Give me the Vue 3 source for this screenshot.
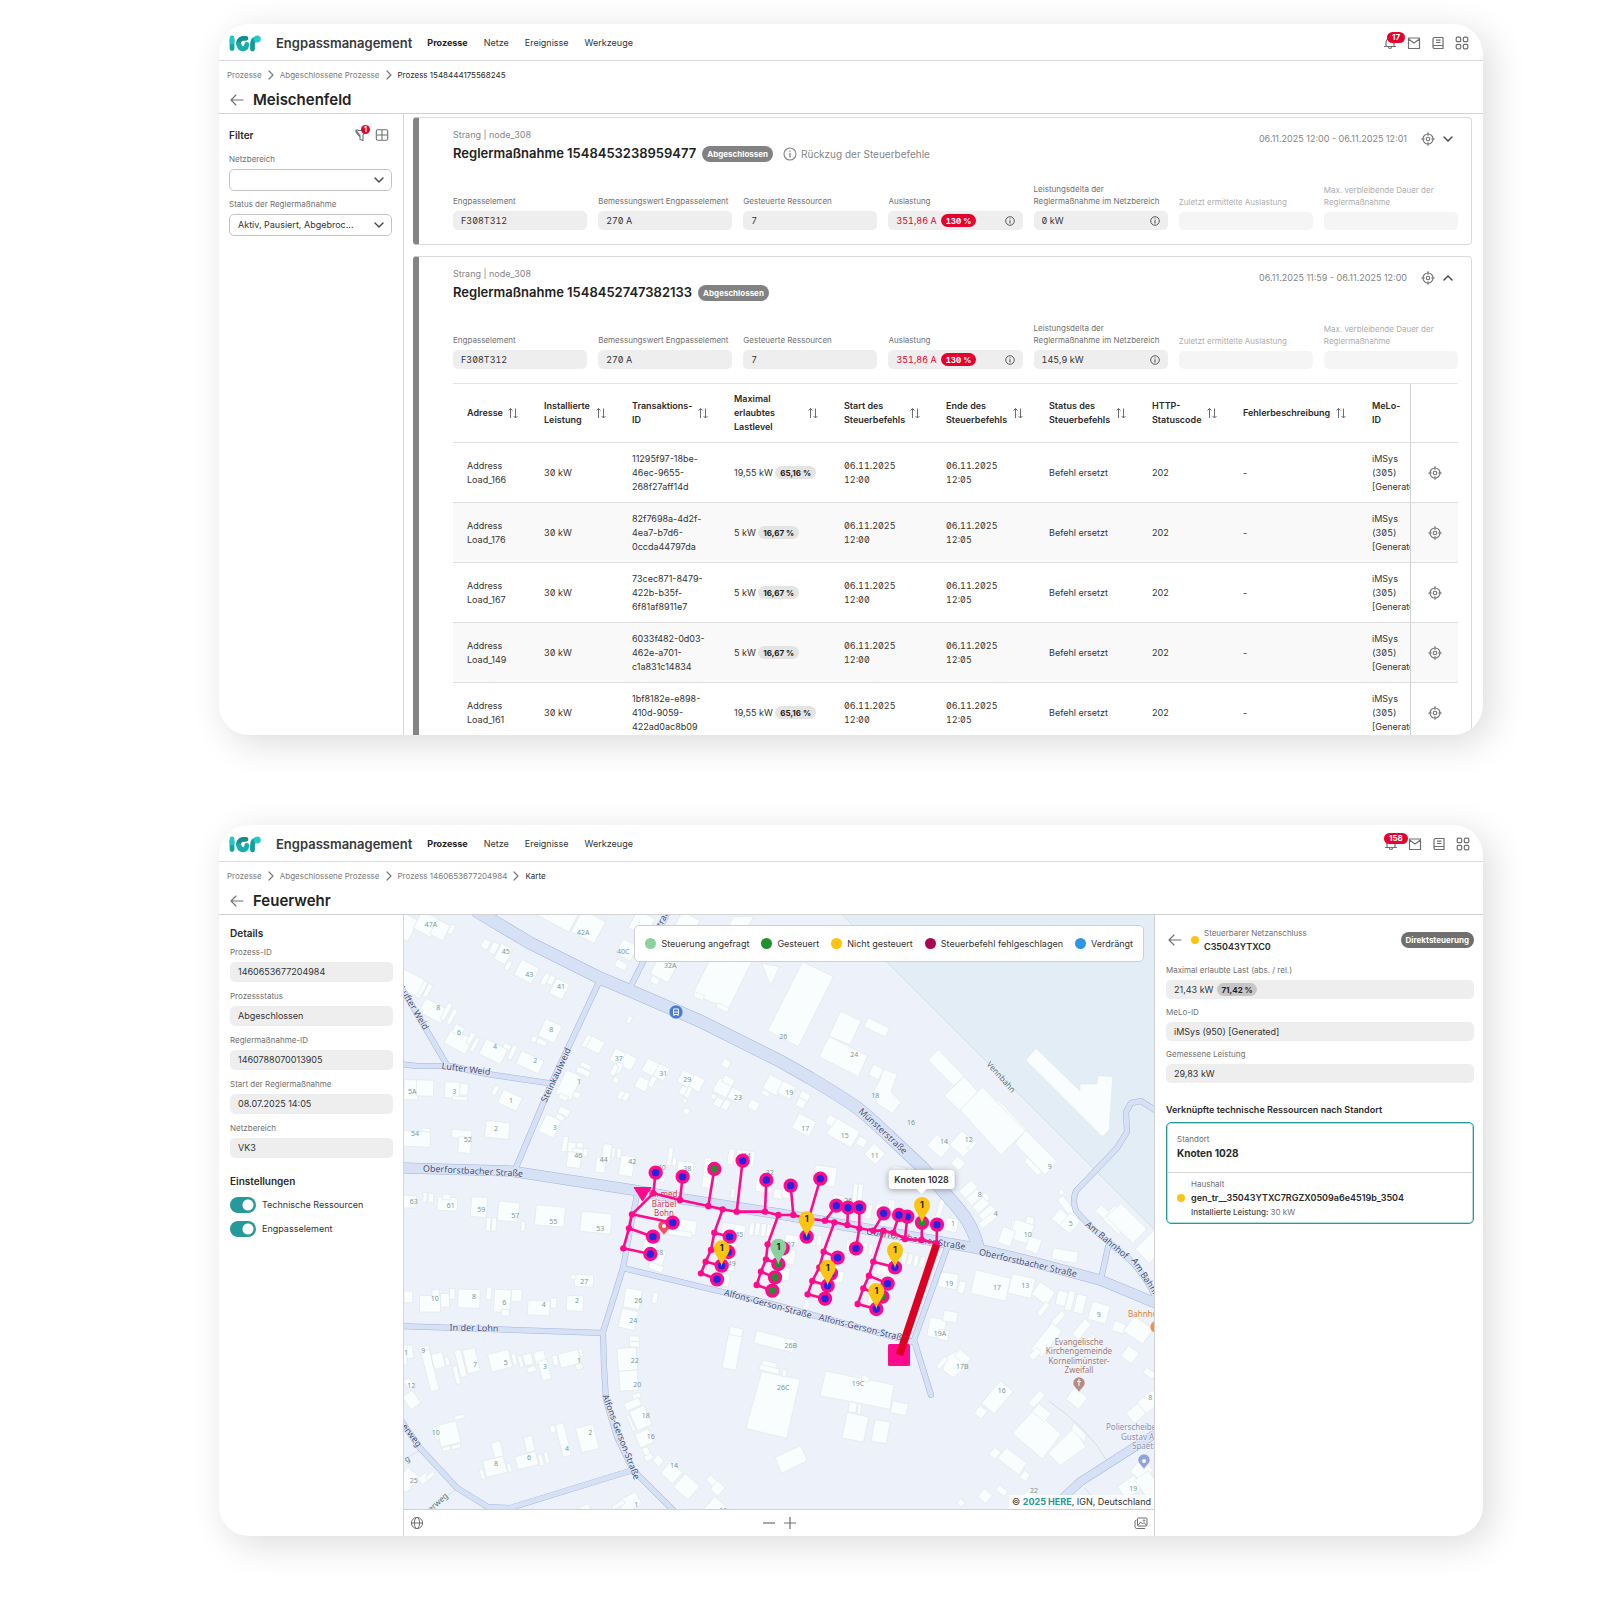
<script setup>
const screens = [
  {
    id: 'liste',
    title: 'Meischenfeld',
    badge: '17',
    crumbs: ['Prozesse', 'Abgeschlossene Prozesse', 'Prozess 1548444175568245'],
  },
  {
    id: 'karte',
    title: 'Feuerwehr',
    badge: '158',
    crumbs: ['Prozesse', 'Abgeschlossene Prozesse', 'Prozess 1460653677204984', 'Karte'],
  },
]
const nav = ['Prozesse', 'Netze', 'Ereignisse', 'Werkzeuge']

const baseFields = (delta) => [
  { label: 'Engpasselement', value: 'F308T312' },
  { label: 'Bemessungswert Engpasselement', value: '270 A' },
  { label: 'Gesteuerte Ressourcen', value: '7' },
  { label: 'Auslastung', value: '351,86 A', pill: '130 %', info: true },
  { label: 'Leistungsdelta der Reglermaßnahme im Netzbereich', value: delta, info: true },
  { label: 'Zuletzt ermittelte Auslastung', disabled: true },
  { label: 'Max. verbleibende Dauer der Reglermaßnahme', disabled: true },
]
const measures = [
  {
    id: '1548453238959477',
    period: '06.11.2025 12:00 - 06.11.2025 12:01',
    note: 'Rückzug der Steuerbefehle',
    open: false,
    fields: baseFields('0 kW'),
  },
  {
    id: '1548452747382133',
    period: '06.11.2025 11:59 - 06.11.2025 12:00',
    open: true,
    fields: baseFields('145,9 kW'),
  },
]

const columns = [
  { text: 'Adresse', w: 77 },
  { text: 'Installierte Leistung', w: 88 },
  { text: 'Transaktions-ID', w: 102 },
  { text: 'Maximal erlaubtes Lastlevel', w: 110 },
  { text: 'Start des Steuerbefehls', w: 102 },
  { text: 'Ende des Steuerbefehls', w: 103 },
  { text: 'Status des Steuerbefehls', w: 103 },
  { text: 'HTTP-Statuscode', w: 91 },
  { text: 'Fehlerbeschreibung', w: 129 },
]
const rows = [
  { load: '166', tx: ['11295f97-18be-', '46ec-9655-', '268f27aff14d'], kw: '19,55 kW', pct: '65,16 %' },
  { load: '176', tx: ['82f7698a-4d2f-', '4ea7-b7d6-', '0ccda44797da'], kw: '5 kW', pct: '16,67 %' },
  { load: '167', tx: ['73cec871-8479-', '422b-b35f-', '6f81af8911e7'], kw: '5 kW', pct: '16,67 %' },
  { load: '149', tx: ['6033f482-0d03-', '462e-a701-', 'c1a831c14834'], kw: '5 kW', pct: '16,67 %' },
  { load: '161', tx: ['1bf8182e-e898-', '410d-9059-', '422ad0ac8b09'], kw: '19,55 kW', pct: '65,16 %' },
]

const details = [
  ['Prozess-ID', '1460653677204984'],
  ['Prozessstatus', 'Abgeschlossen'],
  ['Reglermaßnahme-ID', '1460788070013905'],
  ['Start der Reglermaßnahme', '08.07.2025 14:05'],
  ['Netzbereich', 'VK3'],
]
const toggles = ['Technische Ressourcen', 'Engpasselement']
const legend = [
  ['Steuerung angefragt', '#8bd0a0'],
  ['Gesteuert', '#22902f'],
  ['Nicht gesteuert', '#fbc412'],
  ['Steuerbefehl fehlgeschlagen', '#a8064f'],
  ['Verdrängt', '#2f96e6'],
]

/* Map data: every tile has its own origin and three units per map unit. */
const origin = { nw: [400, 910], ne: [780, 910], sw: [400, 1220], se: [780, 1220], net: [600, 1140] }
const px = (t, x) => origin[t][0] + x / 3
const py = (t, y) => origin[t][1] + y / 3
const pts = (t, str) =>
  str.split(' ').map((p) => { const [x, y] = p.split(','); return px(t, +x) + ',' + py(t, +y) }).join(' ')

/* centre x, centre y, width, height, rotation */
const blocks = {
  nw: [[15,50,56,70,28],[80,42,60,60,28],[120,60,44,50,28],[155,58,14,30,28],[257,103,22,28,28],[282,115,20,36,28],[310,132,38,52,28],[325,167,14,30,28],[380,185,60,52,28],[436,207,16,38,28],[453,210,18,28,28],[478,237,44,50,28],[565,50,78,74,28],[468,12,120,60,28],[680,120,50,50,28],[663,165,36,22,28],[725,40,60,60,28],[790,180,60,55,28],[765,211,26,20,28],[862,40,60,50,28],[688,329,13,22,28],
    [100,302,74,46,28],[139,305,14,56,28],[156,320,14,50,28],[30,218,96,56,28],[68,235,12,46,28],[83,242,14,42,28],[175,394,72,50,28],[175,360,30,28,28],[212,385,14,36,28],[224,404,12,46,28],[280,425,72,50,27],[322,410,24,16,28],[337,427,14,46,25],[390,457,74,42,25],[450,363,54,56,25],[402,388,16,18,25],[425,397,32,16,25],[584,404,48,40,28],[560,393,14,40,28],
    [655,441,40,40,28],[685,455,38,42,28],[655,474,20,32,28],[648,511,18,18,28],[643,480,16,34,28],[506,525,50,78,25],[557,468,34,14,25],[550,486,42,18,25],[530,555,20,18,25],[490,562,28,16,25],[752,472,40,42,28],[785,487,36,42,28],[727,522,38,36,28],[757,515,16,34,28],[857,506,38,40,28],[890,520,36,42,28],[850,542,20,28,28],[865,547,14,34,28],[855,572,12,14,28],[859,604,18,18,28],
    [968,533,46,46,28],[1005,555,36,36,28],[985,512,34,22,28],[955,577,24,26,28],[978,585,20,30,28],[941,560,16,16,28],[978,461,24,24,28],[1061,586,30,28,28],[1120,525,48,48,28],[1160,547,40,36,28],[1097,550,24,14,28],[663,555,16,26,28],[678,560,16,26,28],[33,539,42,60,2],[75,534,52,48,2],[157,540,46,48,3],[192,538,24,34,3],[180,565,46,12,3],[286,541,14,30,28],[330,571,62,44,25],
    [292,660,72,50,6],[48,687,86,46,3],[78,660,26,10,4],[185,673,60,26,5],[194,705,38,48,5],[450,648,50,58,25],[492,605,34,22,28],[480,622,26,16,28],[495,702,16,46,8],[515,712,24,30,8],[540,706,20,16,8],[540,724,44,16,8],[522,750,42,46,8],[556,728,14,24,8],[602,765,30,46,8],[620,730,26,56,8],[640,728,10,28,5],[657,730,14,30,5],[680,768,42,60,8],[778,790,38,48,8],[810,740,14,54,8],[823,755,12,26,8],
    [855,785,48,60,8],[930,804,44,62,8],[922,766,20,46,8],[1035,745,56,46,8],[993,740,18,46,8],[1092,825,48,44,8],[1135,852,28,30,8],[1165,850,38,32,8],[998,850,12,28,8],[22,875,54,38,2],[75,862,12,30,3],[93,864,16,28,3],[142,882,60,40,3],[140,861,24,16,3],[237,891,48,60,4],[325,905,62,58,5],[265,943,14,40,4],[282,944,14,40,4],[369,950,12,30,4],[450,918,88,60,5],[588,938,92,60,5],[850,950,78,44,8]],
  ne: [[290,352,72,30,26],[288,486,34,36,28],[477,708,56,46,42],[548,702,56,56,42],[578,705,12,34,42],[534,760,32,30,42],[20,540,44,40,28],[74,558,30,22,28],[63,580,26,26,28],[72,645,58,50,28],[190,668,84,56,30],[152,632,24,30,28],[245,696,28,26,30],[284,732,46,44,42],[135,798,66,58,8],[225,852,14,60,6],[240,852,14,60,6],[172,880,34,50,10],[310,905,50,46,8],[265,905,20,44,8],[334,890,20,40,8],[355,790,40,40,10],
    [565,838,50,30,-42],[583,862,46,28,-42],[603,885,46,28,-42],[625,912,50,34,-42],[618,860,14,22,-42],[844,847,14,14,40],[865,895,80,22,52],[850,930,60,40,40],[1010,930,70,54,45],[967,905,34,26,40],[480,898,16,60,15],[515,945,36,40,10],[708,950,30,34,10],[745,945,24,50,20]],
  sw: [[25,230,26,34,0],[90,251,62,50,0],[107,218,22,20,0],[135,241,26,40,0],[157,221,16,32,0],[207,236,66,56,2],[267,220,16,38,3],[307,243,50,68,3],[350,227,32,36,2],[316,278,24,20,2],[416,264,66,44,3],[461,249,18,30,3],[525,250,50,46,3],[552,182,56,36,3],[520,171,16,14,3],[75,395,30,34,-14],[90,452,26,124,-14],[115,422,34,46,-14],[142,424,12,26,-14],[214,422,38,72,-14],[182,430,20,84,-14],[170,465,14,56,-14],
    [300,422,64,54,-14],[343,418,12,34,-14],[362,425,12,36,-14],[384,418,26,34,-14],[420,412,32,38,-14],[434,450,28,60,-14],[395,448,26,16,-14],[508,416,62,42,-14],[466,421,16,30,-14],[543,398,10,24,-14],[538,440,20,16,-14],[28,395,22,40,-10],[10,405,22,60,0],[35,540,36,46,-35],[28,492,20,34,-35],[145,642,62,66,-14],[178,591,30,12,-14],[108,640,12,40,-14],[140,686,26,12,-14],[168,680,28,12,-14],
    [285,740,64,50,-14],[292,688,28,46,-14],[247,763,12,30,-14],[328,743,12,26,-14],[380,722,64,40,-14],[388,672,26,46,-14],[423,720,12,34,-14],[440,713,12,36,-14],[490,660,26,100,-14],[458,627,16,22,-14],[562,655,54,76,-14],[22,780,46,60,40],[72,776,24,30,50],[90,768,12,28,50],[698,236,50,58,9],[685,298,50,58,12],[765,234,16,32,10],[703,356,30,16,2],[703,373,30,16,2],[682,418,58,68,-4],[686,482,56,60,-4],
    [710,528,26,16,-14],[698,553,48,24,-24],[722,594,48,62,-24],[693,610,8,54,-24],[733,655,44,44,-24],[738,694,18,24,-24],[746,712,26,18,-30],[775,722,26,24,45],[815,758,48,46,42],[860,800,58,54,42],[936,783,30,20,45],[953,805,32,34,42],[950,868,60,50,42],[690,848,60,42,-28],[655,855,40,12,-28],[555,866,30,20,-28],[772,112,42,50,18],[768,142,44,20,20],[748,85,40,50,15],[840,40,70,16,8],
    [998,388,42,120,11],[1008,335,40,24,11],[1124,365,120,38,14],[1108,434,46,18,14],[1108,448,60,16,14],[1153,460,12,20,14],[1000,32,70,40,8],[990,90,32,40,8],[988,130,32,44,8],[968,180,40,36,10],[1055,27,14,38,8],[1072,28,14,38,8],[1090,30,14,38,8],[1107,32,14,38,8],[1175,60,40,30,8],[1165,110,40,44,8],[1150,160,38,40,8],[1128,215,36,44,14]],
  se: [[505,182,56,46,10],[545,202,20,36,15],[725,198,72,60,14],[790,220,56,46,35],[845,235,30,44,14],[870,242,20,60,14],[900,252,30,56,14],[790,267,16,44,38],[832,300,60,18,-50],[800,360,40,100,38],[765,402,34,20,-45],[957,278,56,56,16],[905,328,60,26,-50],[945,368,50,30,35],[1017,322,36,30,20],[1075,330,70,56,35],[1050,404,40,40,35],[1108,460,34,20,35],[470,324,50,58,10],[511,290,42,32,10],[490,345,32,30,10],[487,428,14,40,40],[548,412,44,26,40],
    [218,562,24,30,8],[238,567,10,32,8],[358,565,48,36,12],[226,622,66,78,12],[302,635,46,66,10],[256,476,22,16,12],[652,532,50,88,40],[602,577,28,30,40],[770,537,22,52,42],[785,578,32,48,-50],[645,700,24,28,38],[735,768,22,26,38],[615,828,32,32,40],[665,812,34,18,38],[543,849,18,18,40],[750,825,30,26,40],[890,535,50,44,38],[1068,580,46,40,-40],[1108,545,60,44,-40],[1085,752,50,50,40],[1050,802,60,46,-35],[1105,795,50,70,-35],
    [725,35,60,60,18],[760,75,40,44,18],[680,50,40,50,20],[855,107,76,34,10],[870,10,40,50,40],[1040,10,110,60,45],[1115,80,60,80,45],[625,0,60,20,-40],[205,75,12,34,8],[220,78,12,34,8],[240,82,12,34,8],[255,85,12,34,8],[272,88,12,34,8],[372,115,14,34,12],[390,118,14,34,12],[408,122,14,34,12],[426,126,14,34,12],[100,62,14,30,8],[118,62,14,30,8],[310,150,40,30,12],[300,190,30,34,12],[285,235,40,34,12],[80,255,18,30,15],[175,170,30,34,12],[160,130,34,30,12]],
}
const shapes = [
  ['nw', '930,150 1055,155 985,297 878,252'], ['nw', '885,245 914,258 908,272 880,258'], ['nw', '952,278 987,294 982,307 948,292'],
  ['nw', '1085,160 1138,170 1112,227'], ['nw', '1000,20 1060,20 1045,50 985,50'],
  ['ne', '68,155 160,200 55,410 -37,362'], ['ne', '182,303 243,333 210,405 147,378'], ['ne', '147,380 263,437 235,500 117,440'],
  ['ne', '310,477 352,493 333,545 363,577 337,610 290,580 283,540 300,510'], ['ne', '475,418 553,500 520,527 443,450'],
  ['ne', '553,500 593,545 540,602 492,557'], ['ne', '655,570 742,660 736,664 650,575'], ['ne', '607,532 737,662 663,735 540,600'],
  ['ne', '737,660 832,755 795,795 705,700'], ['ne', '742,742 785,785 775,798 733,755'],
  ['ne', '768,415 900,543 900,522 950,522 955,497 998,500 988,660 967,680 737,450'],
  ['sw', '1085,455 1200,478 1160,655 1037,625'],
  ['se', '-15,712 62,677 82,722 5,760'], ['se', '587,150 692,175 677,243 572,220'], ['se', '137,453 342,495 330,568 120,527'],
  ['se', '500,410 530,393 555,410 560,440 520,473 488,450'], ['se', '763,568 843,643 787,717 697,640'],
  ['se', '880,625 918,680 840,737 805,700'], ['se', '880,608 918,645 915,668 875,628'], ['se', '680,683 740,730 717,765 652,715'],
]
const roads = [
  { w: 12, d: 'M478 912 530 943 600 978 633 992 700 1021 780 1061 810 1078Q850 1102 860 1110T890 1137L923 1168 957 1207Q973 1225 978 1247' },
  { w: 10, d: 'M400 1168 510 1171 633 1190 683 1199 780 1214 970 1247 1033 1262 1100 1280 1158 1304' },
  { w: 5, d: 'M599 982 553 1080 515 1170' },
  { w: 5, d: 'M630 988 668 912' },
  { w: 5, d: 'M400 1064 417 1066 450 1066 487 1074 548 1083' },
  { w: 5, d: 'M400 985 447 1065' },
  { w: 5, d: 'M637 1195 630 1230 623 1268 603 1332 604 1367 606 1400 617 1437 633 1470 675 1512' },
  { w: 5, d: 'M623 1268 768 1303 913 1342' },
  { w: 5, d: 'M947 1248 914 1340 931 1395' },
  { w: 5, d: 'M400 1326 603 1333' },
  { w: 5, d: 'M633 1470 510 1508 488 1507 457 1488 420 1448 400 1419' },
  { w: 5, d: 'M1158 1112 1141 1101 1131 1103 1126 1112 1127 1132 1117 1148 1076 1191Q1072 1200 1076 1211L1092 1228 1130 1260Q1145 1275 1156 1298' },
  { w: 5, d: 'M1108 1247 1101 1279' },
  { w: 8, d: 'M1158 1432 1080 1482 1050 1510' },
]
const streets = [
  ['Oberforstbacher Straße', 473, 1171, 3], ['Lufter Weid', 466, 1069, 7], ['Lufter Weid', 414, 1008, 59], ['Steinkaulweid', 556, 1075, -65],
  ['straße', 663, 918, -63], ['Am Bahnhof', 1107, 1240, 40], ['Am Bahnhof', 1148, 1281, 57], ['Oberforstbacher Straße', 1028, 1263, 13],
  ['Oberforstbacher Straße', 916, 1239, 9], ['Alfons-Gerson-Straße', 768, 1304, 15], ['Alfons-Gerson-Straße', 863, 1328, 14],
  ['In der Lohn', 474, 1328, 1], ['Alfons-Gerson-Straße', 621, 1437, 69], ['Münsterstraße', 883, 1131, 43], ['nerweg', 410, 1433, 52],
]
const numbers = {
  nw: [['47A',93,42],['42A',550,66],['45',317,124],['43',388,193],['41',483,229],['40C',670,124],['32A',811,165],['8',115,292],['6',177,368],['4',285,410],['2',406,450],['8',454,357],['37',656,444],['1',537,514],['31',790,490],['29',862,508],['23',1014,561],['19',1168,548],['26',1150,380],['5A',37,544],['3',163,543],['1',333,572],['2',288,654],['54',45,671],['52',203,689],['3',464,653],['46',535,736],['44',611,747],['42',697,753],['40',785,771],['38',862,776],['34',1040,735],['32',1109,787],['63',41,875],['61',152,887],['59',244,898],['57',346,915],['55',460,934],['53',601,956]],
  ne: [['24',223,434],['18',286,555],['16',393,637],['14',492,695],['12',566,689],['9',809,770],['17',76,654],['15',194,677],['11',284,736],['8',599,853],['4',647,911],['5',872,940],['1',519,940],['26',205,870]],
  sw: [['27',553,184],['10',104,236],['8',222,230],['6',313,248],['4',431,254],['2',531,242],['1',18,398],['9',70,392],['7',225,433],['5',317,428],['3',435,439],['1',537,422],['12',34,497],['10',107,638],['8',288,731],['6',387,713],['4',501,685],['2',571,637],['25',41,782],['26',715,242],['24',700,300],['22',704,422],['20',712,492],['18',737,585],['16',752,649],['14',822,737],['1',709,853],['12',970,872],['28',778,97],['45',1018,44],['49',995,130],['37',1172,74],['26B',1172,376],['26C',1150,503]],
  se: [['10',743,44],['19',508,189],['17',651,201],['13',736,196],['9',956,282],['19A',480,341],['17B',547,439],['19C',234,491],['16',665,510],['8',1111,533],['19',1060,805],['22',762,812]],
}

const mainLine = '160,160 240,180 325,198 368,208 410,215 495,215 535,225 580,225 620,235 675,242 703,247 742,255 778,265 820,272 850,272 880,278 915,297 965,300 1010,310'
const cables = [
  mainLine,
  '160,160 167,98', '240,180 248,110', '325,198 343,87', '410,215 428,62', '495,215 499,120', '580,225 572,137', '625,240 661,116',
  '675,242 709,197', '742,255 744,203', '778,265 778,202', '778,265 768,325', '820,272 851,220', '880,278 897,225', '915,297 922,230', '965,300 966,248', '1010,310 1011,254',
  '160,160 96,223 87,265 70,325', '96,223 218,248', '87,265 159,290', '70,325 151,342',
  '368,208 343,278 333,330 317,365 303,400', '343,278 389,290', '333,330 385,336', '317,365 365,377', '303,400 351,418',
  '535,225 503,313 498,358 483,395 470,435', '503,313 548,325', '498,358 535,372', '483,395 525,412', '470,435 517,452',
  '703,247 671,335 658,382 637,423 623,463', '671,335 713,353', '658,382 695,400', '637,423 683,437', '623,463 675,476',
  '850,272 820,365 807,407 790,445 773,492', '820,365 885,382', '807,407 863,431', '790,445 847,470', '773,492 829,507',
]
const joints = [...new Set(cables.filter((c) => c === mainLine || c.split(' ').length > 2).join(' ').split(' '))]
  .filter((j) => j !== '620,235')
  .map((j) => j.split(',').map(Number))
const nodes = [
  [167,98],[248,110],[343,87,1],[428,62],[499,120],[572,137],[661,116],[620,290],[709,197],[744,203],[778,202],[768,325],[851,220],[922,230],[897,225],[966,248,1],[1011,254],
  [218,248],[159,290],[151,342],[389,290],[385,336],[365,377],[351,418],[548,325,1],[535,372,1],[525,412,1],[517,452,1],
  [713,353],[693,400],[683,437],[675,476],[885,382],[863,431],[847,470,1],[829,507],
]
const pins = [[620,238],[365,325],[535,320,1],[683,383],[885,330],[829,453],[966,195]]
const pinPath = 'M0 18C-1 12-8 6-8 0A8 8 0 1 1 8 0C8 6 1 12 0 18Z'
</script>

<template>
  <svg class="sprite" aria-hidden="true">
    <symbol id="i-chev" viewBox="0 0 12 12"><path d="M2 4l4 4 4-4" fill="none" stroke="currentColor" stroke-width="1.400" stroke-linecap="round" stroke-linejoin="round" /></symbol>
    <symbol id="i-chev-r" viewBox="0 0 12 12"><path d="M4 2l4 4-4 4" fill="none" stroke="currentColor" stroke-width="1.200" stroke-linecap="round" stroke-linejoin="round" /></symbol>
    <symbol id="i-back" viewBox="0 0 14 14"><path d="M13 7H1.500M6 2L1 7l5 5" fill="none" stroke="currentColor" stroke-width="1.100" stroke-linecap="round" stroke-linejoin="round" /></symbol>
    <symbol id="i-target" viewBox="0 0 14 14"><g fill="none" stroke="currentColor" stroke-width="1.100"><circle cx="7" cy="7" r="5" /><circle cx="7" cy="7" r="1.800" /><path d="M7 .3v3.400M7 10.300v3.400M.3 7h3.400M10.300 7h3.400" /></g></symbol>
    <symbol id="i-info" viewBox="0 0 14 14"><g fill="none" stroke="currentColor" stroke-width="1.100"><circle cx="7" cy="7" r="6" /><path d="M7 6v4.500M7 3.500v1.200" stroke-width="1.300" /></g></symbol>
    <symbol id="i-sort" viewBox="0 0 10 12"><path d="M2.500 11V1.500M.5 3.500l2-2 2 2M7.500 1.500V11M5.500 9l2 2 2-2" fill="none" stroke="currentColor" stroke-width="1" /></symbol>
    <symbol id="i-bell" viewBox="0 0 14 14"><path d="M1.500 10.500h11M3 10.500V6.500a4 4 0 0 1 8 0v4M5.500 11a1.500 1.500 0 0 0 3 0" fill="none" stroke="currentColor" stroke-width="1.200" stroke-linecap="round" /></symbol>
    <symbol id="i-mail" viewBox="0 0 14 14"><path d="M1.500 2h11v10.500h-11zM1.500 3l5.500 4 5.500-4" fill="none" stroke="currentColor" stroke-width="1.200" stroke-linejoin="round" /></symbol>
    <symbol id="i-book" viewBox="0 0 14 14"><path d="M12 9.500V1.500H3.500A1.500 1.500 0 0 0 2 3v8a1.500 1.500 0 0 0 1.500 1.500H12v-3H3.500A1.500 1.500 0 0 0 2 11M5 4.200h4.500M5 6.500h4.500" fill="none" stroke="currentColor" stroke-width="1.200" stroke-linejoin="round" /></symbol>
    <symbol id="i-grid" viewBox="0 0 14 14"><g fill="none" stroke="currentColor" stroke-width="1.200"><rect x="1.200" y="1.200" width="4.500" height="4.500" rx="1.300" /><rect x="8.300" y="1.200" width="4.500" height="4.500" rx="1.300" /><rect x="1.200" y="8.300" width="4.500" height="4.500" rx="1.300" /><rect x="8.300" y="8.300" width="4.500" height="4.500" rx="1.300" /></g></symbol>
    <symbol id="i-funnel" viewBox="0 0 14 14"><path d="M4 2.500h8L9 7v5.500l-3-1V7.500L2 2h2.500M2 2v2l3.500 4.500" fill="none" stroke="currentColor" stroke-width="1.100" stroke-linejoin="round" /></symbol>
    <symbol id="i-table" viewBox="0 0 14 14"><g fill="none" stroke="currentColor" stroke-width="1.100"><rect x="1.300" y="1.800" width="11.400" height="10.400" rx="1.500" /><path d="M7 2v10M1.500 7h11" /></g></symbol>
    <symbol id="i-globe" viewBox="0 0 14 14"><g fill="none" stroke="currentColor" stroke-width="1"><circle cx="7" cy="7" r="5.600" /><ellipse cx="7" cy="7" rx="2.600" ry="5.600" /><path d="M1.500 7h11" /></g></symbol>
    <symbol id="i-minus" viewBox="0 0 14 14"><path d="M1 7h12" stroke="currentColor" stroke-width="1.200" /></symbol>
    <symbol id="i-plus" viewBox="0 0 14 14"><path d="M1 7h12M7 1v12" stroke="currentColor" stroke-width="1.200" /></symbol>
    <symbol id="i-images" viewBox="0 0 14 14"><g fill="none" stroke="currentColor" stroke-width="1" stroke-linejoin="round"><rect x="3.500" y="2" width="9.500" height="8" rx="1" /><path d="M2.500 4L1 5v6.500L2.500 12.500H11M4 9.500l2.500-3.500 2 2 1.500-1.500 2.500 3" /><circle cx="10" cy="4.500" r=".7" /></g></symbol>
  </svg>

  <main class="page">
    <article v-for="s in screens" :key="s.id" class="screen">
      <header class="topbar">
        <svg class="logo" viewBox="0 0 32 17" role="img" aria-label="IGP">
          <g fill="none" stroke-linecap="round">
            <path d="M3 5v8.500" stroke="#12a5a3" stroke-width="4.800" />
            <path d="M3 3v4" stroke="#1fc9c4" stroke-width="4.800" />
            <path d="M17 3.300H13.500A5 5 0 0 0 9.800 10" stroke="#138f90" stroke-width="4.800" />
            <path d="M9.900 9.500C11 15.300 17.300 15 17.800 9.500" stroke="#17adab" stroke-width="4.800" />
            <path d="M23.500 14V8.500C23.500 5 25.500 4 28 4" stroke="#149c9b" stroke-width="4.800" />
          </g>
          <circle cx="28.200" cy="4" r="3.600" fill="#23cbc6" />
        </svg>
        <strong class="app-name">Engpassmanagement</strong>
        <nav class="nav" aria-label="Hauptnavigation">
          <a v-for="(n, i) in nav" :key="n" href="#" :class="{ active: i === 0 }">{{ n }}</a>
        </nav>
        <div class="tools">
          <button type="button" aria-label="Benachrichtigungen"><svg><use href="#i-bell" /></svg><span class="count">{{ s.badge }}</span></button>
          <button type="button" aria-label="Nachrichten"><svg><use href="#i-mail" /></svg></button>
          <button type="button" aria-label="Handbuch"><svg><use href="#i-book" /></svg></button>
          <button type="button" aria-label="Anwendungen"><svg><use href="#i-grid" /></svg></button>
        </div>
      </header>

      <div class="heading">
        <nav class="crumbs" aria-label="Brotkrumen">
          <template v-for="(c, i) in s.crumbs" :key="c">
            <svg v-if="i"><use href="#i-chev-r" /></svg>
            <a href="#" :class="{ current: i === s.crumbs.length - 1 }">{{ c }}</a>
          </template>
        </nav>
        <div class="title-row">
          <button type="button" aria-label="Zurück"><svg class="ico"><use href="#i-back" /></svg></button>
          <h1>{{ s.title }}</h1>
        </div>
      </div>

      <div v-if="s.id === 'liste'" class="body">
        <aside class="side filter">
          <div class="side-head">
            <h2>Filter</h2>
            <button type="button" aria-label="Filter zurücksetzen"><svg class="ico"><use href="#i-funnel" /></svg><span class="dot-count">1</span></button>
            <button type="button" aria-label="Tabellenansicht"><svg class="ico"><use href="#i-table" /></svg></button>
          </div>
          <label class="sel">
            <span class="lab">Netzbereich</span>
            <select><option></option></select>
            <svg><use href="#i-chev" /></svg>
          </label>
          <label class="sel">
            <span class="lab">Status der Reglermaßnahme</span>
            <select><option>Aktiv, Pausiert, Abgebroc...</option></select>
            <svg><use href="#i-chev" /></svg>
          </label>
        </aside>

        <section class="list">
          <div v-for="m in measures" :key="m.id" class="measure">
            <div class="m-head">
              <div>
                <p class="m-sub">Strang | node_308</p>
                <div class="m-title">
                  <h2>Reglermaßnahme {{ m.id }}</h2>
                  <span class="pill">Abgeschlossen</span>
                  <span v-if="m.note" class="note"><svg class="ico"><use href="#i-info" /></svg>{{ m.note }}</span>
                </div>
              </div>
              <div class="m-actions">
                <time>{{ m.period }}</time>
                <button type="button" aria-label="Auf Karte zeigen"><svg class="ico"><use href="#i-target" /></svg></button>
                <button type="button" class="toggle-open" :class="{ open: m.open }" aria-label="Aufklappen"><svg><use href="#i-chev" /></svg></button>
              </div>
            </div>
            <div class="fields">
              <label v-for="f in m.fields" :key="f.label" class="field" :class="{ off: f.disabled }">
                <span class="lab">{{ f.label }}</span>
                <span v-if="f.pill" class="box zero"><span class="alert">{{ f.value }}</span><span class="pill red">{{ f.pill }}</span><svg><use href="#i-info" /></svg></span>
                <span v-else class="box zero">
                  <input type="text" :value="f.value" readonly :disabled="f.disabled" />
                  <svg v-if="f.info"><use href="#i-info" /></svg>
                </span>
              </label>
            </div>
            <table v-if="m.open" class="grid">
              <colgroup>
                <col v-for="c in columns" :key="c.text" :style="{ width: c.w + 'px' }" />
                <col class="c-melo" />
                <col class="c-act" />
              </colgroup>
              <thead>
                <tr>
                  <th v-for="c in columns" :key="c.text" scope="col">
                    <div class="th"><span>{{ c.text }}</span><button type="button" aria-label="Sortieren"><svg><use href="#i-sort" /></svg></button></div>
                  </th>
                  <th scope="col" class="melo">MeLo-<br />ID</th>
                  <th class="act"></th>
                </tr>
              </thead>
              <tbody>
                <tr v-for="r in rows" :key="r.load">
                  <td>Address Load_{{ r.load }}</td>
                  <td class="zero">30 kW</td>
                  <td><template v-for="t in r.tx" :key="t">{{ t }}<br /></template></td>
                  <td class="load">{{ r.kw }} <span class="pill light">{{ r.pct }}</span></td>
                  <td class="zero">06.11.2025 12:00</td>
                  <td class="zero">06.11.2025 12:05</td>
                  <td>Befehl ersetzt</td>
                  <td>202</td>
                  <td>-</td>
                  <td class="melo">iMSys<br /><span class="zero">(305)</span><br />[Generated]</td>
                  <td class="act"><button type="button" aria-label="Auf Karte zeigen"><svg class="ico"><use href="#i-target" /></svg></button></td>
                </tr>
              </tbody>
            </table>
          </div>
        </section>
      </div>

      <div v-else class="body">
        <aside class="side info">
          <h2>Details</h2>
          <div class="stack">
            <label v-for="d in details" :key="d[0]" class="field">
              <span class="lab">{{ d[0] }}</span>
              <span class="box"><input type="text" :value="d[1]" readonly /></span>
            </label>
          </div>
          <h2 class="second">Einstellungen</h2>
          <label v-for="t in toggles" :key="t" class="switch"><input type="checkbox" checked />{{ t }}</label>
        </aside>

        <section class="map-col">
          <div class="map">
            <svg class="canvas" viewBox="404 915 750 594" preserveAspectRatio="xMidYMid slice" role="img" aria-label="Netzkarte">
              <rect x="300" y="800" width="1000" height="800" fill="#edf1f9" />
              <path d="M842 914L887 962 1160 1235V900H842Z" fill="#e3edf6" />
              <path d="M842 914L887 962 1160 1235M1049 1401Q1090 1430 1107 1461M1085 1488L1100 1506M400 1462L420 1450M425 1512L455 1490" fill="none" stroke="#cfe3db" stroke-width="1" />
              <g fill="#f9fdfd" stroke="#e2e8ea" stroke-width=".7">
                <polygon v-for="(b, i) in shapes" :key="i" :points="pts(b[0], b[1])" />
                <template v-for="(list, t) in blocks" :key="t">
                  <rect v-for="(b, i) in list" :key="i" :x="px(t, b[0]) - b[2] / 6" :y="py(t, b[1]) - b[3] / 6" :width="b[2] / 3" :height="b[3] / 3" :transform="`rotate(${b[4]} ${px(t, b[0])} ${py(t, b[1])})`" />
                </template>
              </g>
              <g fill="none" stroke-linejoin="round" stroke-linecap="round">
                <path v-for="(r, i) in roads" :key="'c' + i" :d="r.d" stroke="#a3b4da" :stroke-width="r.w + 1" />
                <path v-for="(r, i) in roads" :key="'f' + i" :d="r.d" stroke="#d7e1f6" :stroke-width="r.w" />
              </g>
              <g class="num">
                <template v-for="(list, t) in numbers" :key="t">
                  <text v-for="(n, i) in list" :key="i" :x="px(t, n[1])" :y="py(t, n[2])" dy=".36em">{{ n[0] }}</text>
                </template>
              </g>
              <g class="street">
                <text v-for="(l, i) in streets" :key="i" :x="l[1]" :y="l[2]" dy=".34em" :transform="`rotate(${l[3]} ${l[1]} ${l[2]})`">{{ l[0] }}</text>
                <text class="trail" x="1001" y="1077" dy=".34em" transform="rotate(48 1001 1077)">Vennbahn</text>
                <text class="trail" x="436" y="1504" dy=".34em" transform="rotate(-42 436 1504)">nerweg</text>
                <text class="trail" x="407" y="1459" dy=".34em" transform="rotate(-30 407 1459)">g</text>
              </g>
              <g class="poi">
                <g class="brown"><text x="1079" y="1345">Evangelische</text><text x="1079" y="1354">Kirchengemeinde</text><text x="1079" y="1364">Kornelimünster-</text><text x="1079" y="1373">Zweifall</text></g>
                <g class="violet"><text x="1106" y="1430">Polierscheibe</text><text x="1121" y="1440">Gustav Adolf</text><text x="1132" y="1449">Spaeth</text></g>
                <g class="orange"><text x="1128" y="1317">Bahnhof</text></g>
                <g class="red"><text x="664" y="1197">Dr. med.</text><text x="664" y="1207">Bärbel</text><text x="664" y="1216">Bohn</text></g>
              </g>
              <g stroke="#fff" stroke-width=".5">
                <path d="M1079 1393c-1-4-6-6-6-10a6 6 0 1 1 12 0c0 4-5 6-6 10z" fill="#b38c84" />
                <path d="M1144 1470c-1-4-6-6-6-10a6 6 0 1 1 12 0c0 4-5 6-6 10z" fill="#93a2d6" />
                <path d="M664 1236c-1-4-6-6-6-10a6 6 0 1 1 12 0c0 4-5 6-6 10z" fill="#ef5063" />
                <circle cx="1156" cy="1327" r="6" fill="#f0924a" />
                <circle cx="676" cy="1012" r="7" fill="#4a7bd3" />
              </g>
              <circle cx="1144" cy="1461" r="2" fill="#fff" />
              <circle cx="664" cy="1226" r="2" fill="#fff" />
              <path d="M1079 1379v7M1077 1381.500h4" stroke="#fff" stroke-width="1" />
              <path d="M673.500 1009h5v5.500h-5zM673.500 1012h5M674 1016v-1M678 1016v-1" fill="none" stroke="#fff" stroke-width="1" />

              <g fill="none" stroke="#ff0a8c" stroke-width="2.600" stroke-linejoin="round">
                <polyline v-for="(c, i) in cables" :key="i" :points="pts('net', c)" />
              </g>
              <circle v-for="(j, i) in joints" :key="'j' + i" :cx="px('net', j[0])" :cy="py('net', j[1])" r="3.200" fill="#ff0a8c" />
              <circle v-for="(n, i) in nodes" :key="'n' + i" :cx="px('net', n[0])" :cy="py('net', n[1])" r="5.400" :fill="n[2] ? '#22902f' : '#1f25e3'" stroke="#ff0a8c" stroke-width="3.500" />
              <path d="M634 1187.500h17L642.500 1201z" fill="#ff0a8c" stroke="#ff0a8c" stroke-width="1" stroke-linejoin="round" />
              <rect x="888" y="1344" width="22" height="22" rx="1.500" fill="#ff0a8c" />
              <path d="M936.500 1244.500L899.500 1355" stroke="#dc0023" stroke-width="7.600" />
              <g v-for="(p, i) in pins" :key="'p' + i" :transform="`translate(${px('net', p[0])} ${py('net', p[1])})`">
                <path :d="pinPath" :fill="p[2] ? '#8bd0a0' : '#fbc412'" />
                <text class="pin-no" y="3">1</text>
              </g>
            </svg>
            <ul class="legend">
              <li v-for="l in legend" :key="l[0]"><i :style="{ background: l[1] }"></i>{{ l[0] }}</li>
            </ul>
            <div class="tip">Knoten 1028</div>
            <p class="credit">© <a href="#">2025 HERE</a>, IGN, Deutschland</p>
          </div>
          <footer class="map-bar">
            <button type="button" aria-label="Kartenebene"><svg class="ico"><use href="#i-globe" /></svg></button>
            <div class="zoom">
              <button type="button" aria-label="Verkleinern"><svg class="ico"><use href="#i-minus" /></svg></button>
              <button type="button" aria-label="Vergrößern"><svg class="ico"><use href="#i-plus" /></svg></button>
            </div>
            <button type="button" aria-label="Bilder"><svg class="ico"><use href="#i-images" /></svg></button>
          </footer>
        </section>

        <aside class="panel">
          <div class="p-head">
            <button type="button" aria-label="Zurück"><svg class="ico"><use href="#i-back" /></svg></button>
            <i class="status"></i>
            <div><p class="lab">Steuerbarer Netzanschluss</p><p class="strong">C35043YTXC0</p></div>
            <span class="pill">Direktsteuerung</span>
          </div>
          <div class="stack">
            <div class="field"><span class="lab">Maximal erlaubte Last (abs. / rel.)</span><span class="box">21,43 kW<span class="pill mid">71,42 %</span></span></div>
            <label class="field"><span class="lab">MeLo-ID</span><span class="box"><input type="text" value="iMSys (950) [Generated]" readonly /></span></label>
            <label class="field"><span class="lab">Gemessene Leistung</span><span class="box"><input type="text" value="29,83 kW" readonly /></span></label>
          </div>
          <h3>Verknüpfte technische Ressourcen nach Standort</h3>
          <div class="site">
            <div class="site-top"><p class="lab">Standort</p><p class="name">Knoten 1028</p></div>
            <div class="site-row">
              <i class="status"></i>
              <div>
                <p class="lab">Haushalt</p>
                <p class="strong">gen_tr__35043YTXC7RGZX0509a6e4519b_3504</p>
                <p class="lab"><b>Installierte Leistung:</b> 30 kW</p>
              </div>
            </div>
          </div>
        </aside>
      </div>
    </article>
  </main>
</template>

<style>
html, body { background: #fff; }
</style>

<style scoped>
* { box-sizing: border-box; }
h1, h2, h3, p, ul { margin: 0; padding: 0; font: inherit; }
a { color: inherit; text-decoration: none; }
button { display: inline-flex; align-items: center; justify-content: center; padding: 0; border: 0; background: none; color: #6f6f6f; cursor: pointer; position: relative; }
button svg, .ico { width: 14px; height: 14px; display: block; flex: none; }
input { font: inherit; color: inherit; font-feature-settings: inherit; }
.sprite { position: absolute; width: 0; height: 0; }

.page { font: 400 9px/12px Inter, "Open Sans", sans-serif; color: #333; padding: 24px 117px 64px 219px; display: flex; flex-direction: column; gap: 90px; }
.screen { aspect-ratio: 16 / 9; border-radius: 30px; background: #fff; overflow: hidden; display: flex; flex-direction: column; box-shadow: 8px 8px 36px rgba(0, 0, 0, .14); }

.topbar { display: flex; align-items: center; gap: 15px; height: 37px; flex: none; padding: 2px 14px 0 10px; border-bottom: 1px solid #dcdcdc; }
.logo { width: 32px; height: 17px; display: block; }
.app-name { font-size: 13px; line-height: 16px; font-weight: 600; color: #3a3a3a; }
.nav { display: flex; gap: 16px; }
.nav .active { font-weight: 700; color: #222; }
.tools { margin-left: auto; display: flex; gap: 10px; }
.count { position: absolute; left: 4px; top: -4px; min-width: 18px; height: 11px; padding: 0 5px; border-radius: 6px; background: #e4032e; color: #fff; font: 700 8px/11px Inter, sans-serif; }
.screen:nth-child(2) .count { left: 0; }
.screen:nth-child(2) .tools { margin-right: -1px; }

.heading { flex: none; height: 53px; padding: 8px 8px 0; border-bottom: 1px solid #d2d2d2; }
.crumbs { display: flex; align-items: center; gap: 3px; font-size: 8px; color: #7b7b7b; height: 12px; }
.crumbs svg { width: 12px; height: 12px; }
.crumbs .current { color: #2a2a2a; }
.title-row { display: flex; align-items: center; gap: 9px; margin-top: 9px; padding-left: 3px; height: 20px; }
h1 { font-size: 15px; line-height: 20px; font-weight: 600; color: #222; }

.body { flex: 1; min-height: 0; display: flex; }
.side { width: 185px; flex: none; padding: 12px 11px 0 10px; border-right: 1px solid #d6d6d6; }
.side h2 { font-size: 10px; line-height: 14px; font-weight: 600; color: #2a2a2a; }
.info { padding: 11px 10px 0 11px; }
.lab { font-size: 8px; line-height: 12px; color: #707070; }
.filter { padding-top: 14px; }
.side-head { display: flex; gap: 7px; padding-right: 3px; margin-bottom: 11px; }
.side-head h2 { flex: 1; }
.dot-count { position: absolute; left: 7px; top: -3px; width: 9px; height: 9px; border-radius: 50%; background: #e4032e; color: #fff; font: 700 7px/9px Inter, sans-serif; text-align: center; }
.sel { display: flex; flex-direction: column; gap: 4px; position: relative; margin-bottom: 7px; }
.sel select { appearance: none; width: 100%; height: 22px; border: 1px solid #c4c4c4; border-radius: 5px; background: #fff; padding: 0 8px; font: 400 9px/12px Inter, sans-serif; color: #333; }
.sel svg { position: absolute; right: 7px; bottom: 5px; width: 12px; height: 12px; pointer-events: none; color: #444; }

.list { flex: 1; min-width: 0; padding: 3px 11px 0 9px; overflow: hidden; display: flex; flex-direction: column; gap: 11px; }
.measure { flex: none; border: 1px solid #dcdcdc; border-left: 6px solid #848484; border-radius: 4px; padding: 11px 13px 13px 34px; }
.m-head { display: flex; justify-content: space-between; }
.m-sub { color: #858585; }
.m-title { display: flex; align-items: center; gap: 6px; height: 17px; margin-top: 4px; }
.m-title h2 { font-size: 13px; line-height: 17px; font-weight: 600; color: #222; }
.pill { display: inline-flex; align-items: center; height: 16px; padding: 0 5px; border-radius: 8px; background: #828282; color: #fff; font-size: 8px; font-weight: 700; white-space: nowrap; }
.note { display: flex; align-items: center; gap: 4px; margin-left: 4px; color: #858585; font-size: 10px; }
.m-actions { display: flex; align-items: center; gap: 14px; height: 20px; padding-right: 4px; color: #858585; }
.m-actions button + button { margin-left: -7px; color: #444; }
.m-actions time { white-space: nowrap; }
.open svg { transform: rotate(180deg); }
.toggle-open svg { width: 12px; height: 12px; }
.fields { display: grid; grid-template-columns: repeat(7, minmax(0, 1fr)); gap: 11px; margin-top: 22px; align-items: end; }
.field { display: flex; flex-direction: column; gap: 4px; min-height: 35px; justify-content: flex-end; }
.box { display: flex; align-items: center; height: 19px; padding: 0 8px; border-radius: 5px; background: #eee; color: #333; }
.box input { flex: 1; min-width: 0; width: 100%; border: 0; padding: 0; background: none; outline: 0; }
.box svg { width: 10px; height: 10px; margin-left: auto; flex: none; }
.alert { color: #e4032e; }
.box .pill { height: 13px; margin-left: 4px; }
.pill.red { background: #e4032e; }
.pill.mid { background: #c6c6c6; color: #222; padding: 0 4px; }
.pill.light { background: #e4e4e4; color: #222; height: 13px; }
.off .lab { color: #adadad; }
.off .box { background: #f5f5f5; height: 18px; }
.zero { font-feature-settings: "zero", "tnum"; }

.measure .fields { margin-top: 21px; }
.measure:first-child { padding-bottom: 14px; }
.grid { width: 100%; margin-top: 14px; table-layout: fixed; border-collapse: separate; border-spacing: 0; line-height: 14px; border-top: 1px solid #e4e4e4; }
.c-melo { width: 52px; }
.c-act { width: 48px; }
.grid th { height: 59px; padding: 0 12px 0 14px; text-align: left; font-weight: 600; color: #2a2a2a; border-bottom: 1px solid #dedede; }
.grid td { height: 60px; padding: 0 0 0 14px; border-bottom: 1px solid #dedede; color: #333; }
.grid td:nth-child(5), .grid td:nth-child(6) { padding-right: 30px; }
.grid td:first-child { padding-right: 10px; }
.grid tbody tr:nth-child(even) td { background: #f9f9f9; }
.grid .load { white-space: nowrap; }
.th { display: flex; align-items: center; justify-content: space-between; gap: 3px; }
.th svg { width: 10px; height: 12px; }
.grid .melo { padding: 0 0 0 14px; overflow: hidden; white-space: nowrap; }
.grid .act { padding: 0; border-left: 1px solid #d2d2d2; text-align: center; }
.grid .act button { vertical-align: middle; }

.stack { display: flex; flex-direction: column; gap: 8px; }
.side .stack { margin-top: 6px; }
.side .box { height: 20px; }
.side .second { margin: 16px 0 9px; }
.switch { display: flex; align-items: center; gap: 6px; height: 16px; margin-bottom: 8px; }
.switch input { appearance: none; margin: 0; width: 26px; height: 16px; border-radius: 8px; background: radial-gradient(circle at 18px 8px, #fff 5px, #26999a 6px); }

.map-col { flex: 1; min-width: 0; display: flex; flex-direction: column; }
.map { position: relative; flex: 1; min-height: 0; overflow: hidden; }
.canvas { position: absolute; inset: 0; width: 100%; height: 100%; }
.num text { font: 400 7px "Noto Sans", sans-serif; fill: #7d989b; text-anchor: middle; }
.street text { font: 400 9px "Noto Sans", sans-serif; fill: #3f4c74; text-anchor: middle; stroke: #e9effa; stroke-width: 1px; paint-order: stroke; }
.street .trail { fill: #5d7a74; font-size: 8px; }
.poi text { font: 400 8px "Noto Sans", sans-serif; stroke: #f4f6fb; stroke-width: 1px; paint-order: stroke; }
.brown, .red { text-anchor: middle; }
.brown { fill: #9d7a72; }
.violet { fill: #8990b5; }
.orange { fill: #d48238; }
.red { fill: #cf3a4d; }
.pin-no { font: 700 9px Inter, sans-serif; fill: #222; text-anchor: middle; }
.legend { position: absolute; top: 10px; right: 10px; height: 37px; padding: 0 10px; display: flex; align-items: center; gap: 12px; list-style: none; background: #fff; border: 1px solid #cfcfcf; border-radius: 5px; white-space: nowrap; }
.legend li { display: flex; align-items: center; gap: 5px; }
.legend i { width: 11px; height: 11px; border-radius: 50%; }
.tip { position: absolute; left: 69%; top: 43%; translate: -50% 0; padding: 3px 6px; border-radius: 4px; background: #fff; font-weight: 600; line-height: 13px; box-shadow: 0 1px 6px rgba(0, 0, 0, .35); }
.tip::after { content: ""; position: absolute; left: 50%; bottom: -5px; margin-left: -6px; border: 6px solid transparent; border-top-color: #fff; border-bottom: 0; }
.credit { position: absolute; right: 0; bottom: 0; padding: 1px 3px; background: rgba(255, 255, 255, .8); }
.credit a { color: #26999a; font-weight: 700; }
.map-bar { display: flex; justify-content: space-between; align-items: center; height: 27px; flex: none; padding: 0 6px; border-top: 1px solid #d2d2d2; }
.zoom { display: flex; gap: 7px; }

.panel { width: 329px; flex: none; padding: 15px 9px 0 11px; border-left: 1px solid #d2d2d2; }
.p-head { display: flex; align-items: center; height: 20px; padding-left: 2px; margin-bottom: 14px; }
.p-head .status { margin: 0 5px 0 9px; }
.p-head .pill { margin-left: auto; background: #6f6f6f; }
.p-head p { line-height: 14px; }
.status { width: 8px; height: 8px; border-radius: 50%; background: #fbc412; flex: none; }
.strong { font-weight: 600; color: #2a2a2a; }
.panel .stack { gap: 7px; }
.panel h3 { margin: 20px 0 6px; font-weight: 600; line-height: 13px; color: #2a2a2a; }
.site { border: 1px solid #26999a; border-radius: 5px; box-shadow: inset 0 0 0 1px rgba(38, 153, 154, .35); }
.site-top { padding: 10px; height: 49px; }
.site-top .name { font-size: 10px; line-height: 16px; font-weight: 700; color: #2a2a2a; }
.site-row { border-top: 1px solid #d8d8d8; padding: 4px 10px; display: flex; align-items: center; gap: 6px; }
.site-row p { line-height: 14px; }
.site-row b { font-weight: 500; color: #444; }
</style>
